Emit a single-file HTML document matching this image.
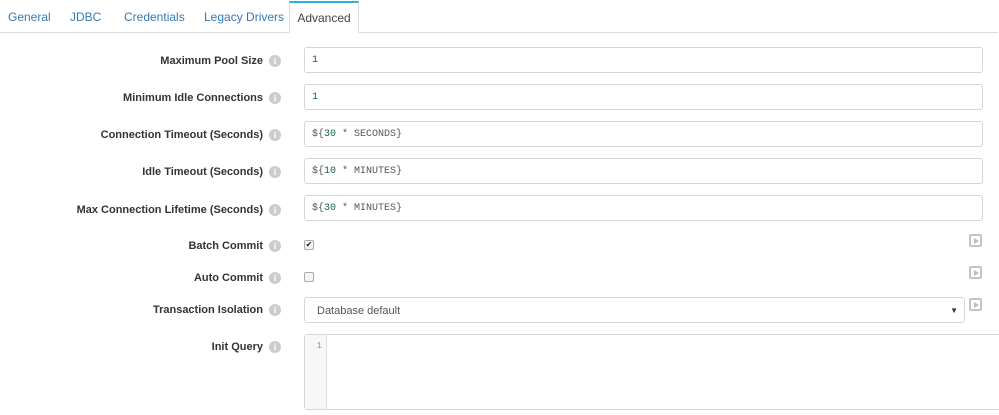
<!DOCTYPE html>
<html><head><style>
*{box-sizing:border-box;margin:0;padding:0}
body{width:999px;height:415px;background:#fff;font-family:"Liberation Sans",sans-serif;position:relative;overflow:hidden}
.tabs{position:absolute;left:0;top:0;width:998px;height:33px;border-bottom:1px solid #ddd}
.tab{position:absolute;top:10px;font-size:12px;color:#337ab7}
.act{position:absolute;left:289px;top:1px;width:70px;height:32px;border:1px solid #ddd;border-top:2px solid #2ab1e0;border-bottom:1px solid #fff;background:#fff;font-size:12px;color:#444;text-align:center;padding-top:8px}
.lbl{position:absolute;right:736px;font-size:11px;font-weight:bold;color:#333;white-space:nowrap}
.info{position:absolute;left:269px;width:12px;height:12px;border-radius:50%;background:#ccc;color:#fff;font-size:9px;font-weight:bold;text-align:center;line-height:12px;font-family:"Liberation Serif",serif}
.inp{position:absolute;left:304px;width:679px;height:26px;border:1px solid #d6d6d6;border-radius:3px;font-family:"Liberation Mono",monospace;font-size:10px;color:#555;padding:7px 7px}
.n{color:#164}
.cb{position:absolute;left:304px;width:10px;height:10px;border:1px solid #aaa;border-radius:2px;background:#f4f4f4;font-size:8px;line-height:8px;text-align:center;color:#222}
.play{position:absolute;left:969px;width:13px;height:13px;border:2px solid #c4c4c4;border-radius:2px}
.play:after{content:"";position:absolute;left:3px;top:2px;border-left:5px solid #bbb;border-top:3px solid transparent;border-bottom:3px solid transparent}
</style></head><body>
<div class="tabs">
<span class="tab" style="left:8px">General</span>
<span class="tab" style="left:70px">JDBC</span>
<span class="tab" style="left:124px">Credentials</span>
<span class="tab" style="left:204px">Legacy Drivers</span>
<div class="act">Advanced</div>
</div>

<div class="lbl" style="top:55px">Maximum Pool Size</div><div class="info" style="top:55px">i</div>
<div class="inp" style="top:47px"><span class="n">1</span></div>
<div class="lbl" style="top:92px">Minimum Idle Connections</div><div class="info" style="top:92px">i</div>
<div class="inp" style="top:84px"><span class="n">1</span></div>
<div class="lbl" style="top:129px">Connection Timeout (Seconds)</div><div class="info" style="top:129px">i</div>
<div class="inp" style="top:121px">${<span class="n">30</span> * SECONDS}</div>
<div class="lbl" style="top:166px">Idle Timeout (Seconds)</div><div class="info" style="top:166px">i</div>
<div class="inp" style="top:158px">${<span class="n">10</span> * MINUTES}</div>
<div class="lbl" style="top:204px">Max Connection Lifetime (Seconds)</div><div class="info" style="top:204px">i</div>
<div class="inp" style="top:195px">${<span class="n">30</span> * MINUTES}</div>

<div class="lbl" style="top:240px">Batch Commit</div><div class="info" style="top:240px">i</div>
<div class="cb" style="top:240px">✔</div>
<div class="play" style="top:234px"></div>
<div class="lbl" style="top:272px">Auto Commit</div><div class="info" style="top:272px">i</div>
<div class="cb" style="top:272px"></div>
<div class="play" style="top:266px"></div>
<div class="lbl" style="top:304px">Transaction Isolation</div><div class="info" style="top:304px">i</div>
<div class="inp" style="top:297px;width:661px;height:26px;font-family:'Liberation Sans',sans-serif;font-size:11px;padding:7px 12px">Database default<span style="position:absolute;right:6px;top:8px;font-size:8px;color:#333">▼</span></div>
<div class="play" style="top:298px"></div>
<div class="lbl" style="top:341px">Init Query</div><div class="info" style="top:341px">i</div>
<div style="position:absolute;left:304px;top:334px;width:700px;height:76px;border:1px solid #d6d6d6;border-radius:3px">
<div style="position:absolute;left:0;top:0;width:22px;height:100%;background:#f7f7f7;border-right:1px solid #ddd;font-family:'Liberation Mono',monospace;font-size:9px;color:#999;text-align:right;padding:6px 4px 0 0">1</div>
</div>
</body></html>
